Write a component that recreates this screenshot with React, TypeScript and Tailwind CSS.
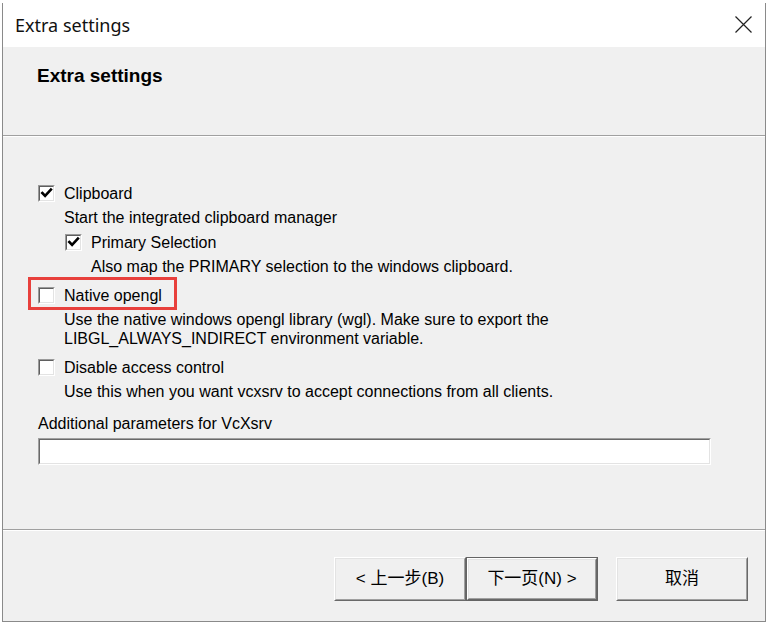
import React from "react";

function Check() {
  return (
    <svg width="13" height="13" viewBox="0 0 13 13" className="block">
      <path d="M2.3 6 L5.1 8.9 L10.9 2.6" fill="none" stroke="#000" strokeWidth="2.6" strokeLinecap="square" />
    </svg>
  );
}

function Box({ checked }: { checked?: boolean }) {
  return (
    <div className="w-[17px] h-[17px] shrink-0 border border-t-[#9a9a9a] border-l-[#9a9a9a] border-b-white border-r-white">
      <div className="w-full h-full border border-t-[#5f5f5f] border-l-[#5f5f5f] border-b-[#e3e3e3] border-r-[#e3e3e3] bg-white flex items-center justify-center">
        {checked ? <Check /> : null}
      </div>
    </div>
  );
}

export default function App() {
  const body = { fontFamily: '"Liberation Sans", Arial, sans-serif' };
  const cjk = { fontFamily: '"Liberation Sans", "Noto Sans CJK SC", sans-serif' };
  return (
    <div className="w-[768px] h-[624px] bg-white pt-[3px] pl-[2px] overflow-hidden">
      <div className="w-[764px] h-[619px] border-l border-r border-b border-[#8a8a8a] flex flex-col bg-[#f0f0f0] text-black" style={body}>
        {/* title bar */}
        <div className="h-[44px] shrink-0 bg-white flex items-center justify-between pl-[12px] pr-[13px]">
          <span className="text-[18px] leading-none text-[#111]" style={{ fontFamily: '"Noto Sans", sans-serif' }}>Extra settings</span>
          <svg width="17" height="17" viewBox="0 0 17 17" className="-mt-[2px]">
            <path d="M0.5 0.5 L16.5 16.5 M16.5 0.5 L0.5 16.5" stroke="#222" strokeWidth="1.2" />
          </svg>
        </div>
        {/* header */}
        <div className="h-[88px] shrink-0 pl-[34px] pt-[19px]">
          <div className="text-[19px] leading-[19px] font-bold">Extra settings</div>
        </div>
        <div className="h-[2px] shrink-0 border-t border-b border-t-[#a0a0a0] border-b-white" />
        {/* content */}
        <div className="h-[392px] shrink-0 pl-[35px] text-[16px] leading-[19px]">
          <div className="mt-[47px] flex items-center gap-[9px] h-[19px]">
            <Box checked />
            <span>Clipboard</span>
          </div>
          <div className="mt-[5px] ml-[26px] h-[19px]">Start the integrated clipboard manager</div>
          <div className="mt-[6px] ml-[27px] flex items-center gap-[9px] h-[19px]">
            <Box checked />
            <span>Primary Selection</span>
          </div>
          <div className="mt-[5px] ml-[53px] h-[19px]">Also map the PRIMARY selection to the windows clipboard.</div>
          <div className="mt-[10px] relative flex items-center gap-[9px] h-[19px]">
            <Box />
            <span>Native opengl</span>
            <div className="absolute left-[-10px] top-[-9px] w-[149px] h-[33px] border-[3px] border-[#e8403c]" />
          </div>
          <div className="mt-[5px] ml-[26px]">
            <div className="h-[19px]">Use the native windows opengl library (wgl). Make sure to export the</div>
            <div className="h-[19px]">LIBGL_ALWAYS_INDIRECT environment variable.</div>
          </div>
          <div className="mt-[10px] flex items-center gap-[9px] h-[19px]">
            <Box />
            <span>Disable access control</span>
          </div>
          <div className="mt-[5px] ml-[26px] h-[19px]">Use this when you want vcxsrv to accept connections from all clients.</div>
          <div className="mt-[13px] h-[19px]">Additional parameters for VcXsrv</div>
          <div className="mt-[5px] w-[673px] h-[27px] border border-t-[#a0a0a0] border-l-[#a0a0a0] border-b-white border-r-white">
            <div className="w-full h-full border border-t-[#696969] border-l-[#696969] border-b-[#e3e3e3] border-r-[#e3e3e3] bg-white" />
          </div>
        </div>
        <div className="h-[2px] shrink-0 border-t border-b border-t-[#a0a0a0] border-b-white" />
        {/* footer */}
        <div className="flex-1 flex justify-end items-start pt-[26px] pr-[17px] text-[17px]" style={cjk}>
          <div className="flex">
            <div className="w-[132px] h-[44px] border border-t-white border-l-white border-b-[#696969] border-r-[#696969]">
              <div className="w-full h-full border border-t-[#e3e3e3] border-l-[#e3e3e3] border-b-[#a0a0a0] border-r-[#a0a0a0] flex items-center justify-center">
                &lt; 上一步(B)
              </div>
            </div>
            <div className="w-[132px] h-[44px] border border-[#646464]">
              <div className="w-full h-full border border-t-white border-l-white border-b-[#696969] border-r-[#696969]">
                <div className="w-full h-full border border-t-[#e3e3e3] border-l-[#e3e3e3] border-b-[#a0a0a0] border-r-[#a0a0a0] flex items-center justify-center">
                  下一页(N) &gt;
                </div>
              </div>
            </div>
          </div>
          <div className="ml-[18px] w-[132px] h-[44px] border border-t-white border-l-white border-b-[#696969] border-r-[#696969]">
            <div className="w-full h-full border border-t-[#e3e3e3] border-l-[#e3e3e3] border-b-[#a0a0a0] border-r-[#a0a0a0] flex items-center justify-center">
              取消
            </div>
          </div>
        </div>
      </div>
    </div>
  );
}
